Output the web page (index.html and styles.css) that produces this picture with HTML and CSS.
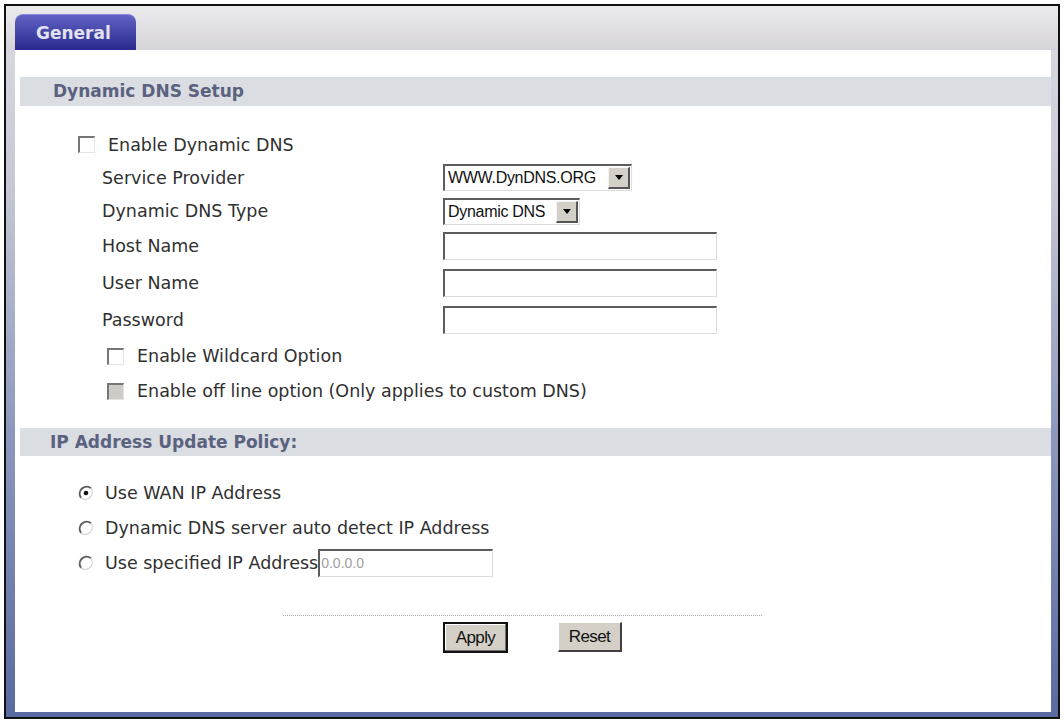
FILE: index.html
```html
<!DOCTYPE html>
<html lang="en">
<head>
    <meta charset="UTF-8">
    <title>Dynamic DNS</title>
    <link rel="stylesheet" href="styles.css">
</head>
<body>
    <div class="frame">
        <div class="tabbar">
            <div class="tab">General</div>
        </div>
        <div class="panel">
            <div class="section-title">Dynamic DNS Setup</div>

            <div class="row row-33 indent-main">
                <span class="check"></span>
                <span class="check-label">Enable Dynamic DNS</span>
            </div>
            <div class="row row-33 field">
                <span class="label">Service Provider</span>
                <div class="select select-wide">
                    <span class="select-value">WWW.DynDNS.ORG</span>
                    <span class="select-btn"><span class="arrow"></span></span>
                </div>
            </div>
            <div class="row row-34 field">
                <span class="label">Dynamic DNS Type</span>
                <div class="select select-short">
                    <span class="select-value">Dynamic DNS</span>
                    <span class="select-btn"><span class="arrow"></span></span>
                </div>
            </div>
            <div class="row row-36 field">
                <span class="label">Host Name</span>
                <span class="input input-wide"></span>
            </div>
            <div class="row row-37 field">
                <span class="label">User Name</span>
                <span class="input input-wide"></span>
            </div>
            <div class="row row-37 field">
                <span class="label">Password</span>
                <span class="input input-wide"></span>
            </div>
            <div class="row row-36 indent-sub">
                <span class="check"></span>
                <span class="check-label">Enable Wildcard Option</span>
            </div>
            <div class="row row-34 indent-sub">
                <span class="check disabled"></span>
                <span class="check-label">Enable off line option (Only applies to custom DNS)</span>
            </div>

            <div class="section-title section-two">IP Address Update Policy:</div>

            <div class="radios">
                <div class="row row-34 indent-radio">
                    <svg class="radio" width="16" height="16" viewBox="0 0 16 16">
                        <circle cx="8" cy="8" r="7" fill="#fff"/>
                        <path d="M3.1 12.9 A7 7 0 0 1 12.9 3.1" stroke="#5e5e5e" stroke-width="2" fill="none"/>
                        <path d="M12.9 3.1 A7 7 0 0 1 3.1 12.9" stroke="#d6d6d6" stroke-width="1.4" fill="none"/>
                        <circle cx="8" cy="8" r="2.3" fill="#111"/>
                    </svg>
                    <span class="check-label">Use WAN IP Address</span>
                </div>
                <div class="row row-36 indent-radio">
                    <svg class="radio" width="16" height="16" viewBox="0 0 16 16">
                        <circle cx="8" cy="8" r="7" fill="#fff"/>
                        <path d="M3.1 12.9 A7 7 0 0 1 12.9 3.1" stroke="#5e5e5e" stroke-width="2" fill="none"/>
                        <path d="M12.9 3.1 A7 7 0 0 1 3.1 12.9" stroke="#d6d6d6" stroke-width="1.4" fill="none"/>
                    </svg>
                    <span class="check-label">Dynamic DNS server auto detect IP Address</span>
                </div>
                <div class="row row-34 indent-radio">
                    <svg class="radio" width="16" height="16" viewBox="0 0 16 16">
                        <circle cx="8" cy="8" r="7" fill="#fff"/>
                        <path d="M3.1 12.9 A7 7 0 0 1 12.9 3.1" stroke="#5e5e5e" stroke-width="2" fill="none"/>
                        <path d="M12.9 3.1 A7 7 0 0 1 3.1 12.9" stroke="#d6d6d6" stroke-width="1.4" fill="none"/>
                    </svg>
                    <span class="check-label">Use specified IP Address</span><span class="input input-ip">0.0.0.0</span>
                </div>
            </div>

            <div class="divider"></div>

            <div class="buttons">
                <span class="btn btn-default">Apply</span>
                <span class="btn">Reset</span>
            </div>
        </div>
    </div>
</body>
</html>
```

FILE: styles.css
```css
body {
    margin: 0;
    background: #fff;
    font-family: "DejaVu Sans", Verdana, sans-serif;
    font-size: 17.5px;
    color: #303030;
}

.frame {
    margin: 4px;
    border: 2px solid #111;
    background: linear-gradient(to bottom, #dcdce2 0%, #c6c8d4 25%, #8c98be 60%, #5a6aa0 100%);
    padding: 0 7px 5px 9px;
    width: 1036px;
}

.tabbar {
    height: 44px;
    margin: 0 -7px 0 -9px;
    padding: 8px 0 0 9px;
    box-sizing: border-box;
    background: linear-gradient(to bottom, #ececef, #d5d3d9);
}

.tab {
    width: 121px;
    height: 36px;
    box-sizing: border-box;
    padding-left: 21px;
    line-height: 36px;
    border-radius: 8px 8px 0 0;
    background: linear-gradient(to bottom, #6262c4, #28288e);
    border-top: 1px solid #8888d8;
    color: #e2e3f0;
    font-size: 17px;
    font-weight: bold;
}

.panel {
    height: 662px;
    background: #fff;
    overflow: hidden;
}

.section-title {
    margin: 27px 0 0 5px;
    height: 29px;
    line-height: 29px;
    padding-left: 33px;
    background: #dadde1;
    color: #5a6280;
    font-size: 17px;
    font-weight: bold;
}

.section-two {
    margin-top: 20px;
    height: 28px;
    line-height: 28px;
    padding-left: 30px;
}

.row {
    display: flex;
    align-items: center;
    white-space: nowrap;
}

.row-33 { height: 33px; }
.row-34 { height: 34px; }
.row-36 { height: 36px; }
.row-37 { height: 37px; }

.indent-main {
    margin-top: 22px;
    padding-left: 63px;
}

.indent-sub {
    padding-left: 92px;
}

.indent-radio {
    padding-left: 63px;
}

.field {
    padding-left: 87px;
}

.label {
    width: 341px;
}

.check {
    width: 17px;
    height: 17px;
    box-sizing: border-box;
    border-top: 2px solid #767676;
    border-left: 2px solid #767676;
    border-right: 1px solid #e4e4e4;
    border-bottom: 1px solid #e4e4e4;
    background: #fff;
    margin-right: 13px;
}

.check.disabled {
    background: #cdcdc6;
}

.radio {
    margin-right: 11px;
}

.radios {
    margin-top: 20px;
}

.select {
    display: flex;
    align-items: center;
    height: 27px;
    box-sizing: border-box;
    border-top: 2px solid #5c5c5c;
    border-left: 2px solid #5c5c5c;
    border-right: 1px solid #dcdcdc;
    border-bottom: 1px solid #dcdcdc;
    font-family: "Liberation Sans", Arial, sans-serif;
    font-size: 16px;
    color: #111;
}

.select-wide { width: 189px; }
.select-short { width: 137px; }

.select-value {
    flex: 1;
    padding-left: 3px;
    letter-spacing: -0.3px;
}

.select-btn {
    width: 22px;
    height: 22px;
    margin-right: 1px;
    box-sizing: border-box;
    background: #d4d0c8;
    border-top: 1px solid #f4f4f4;
    border-left: 1px solid #f4f4f4;
    border-right: 2px solid #555;
    border-bottom: 2px solid #555;
    display: flex;
    align-items: center;
    justify-content: center;
}

.arrow {
    width: 0;
    height: 0;
    border-left: 4px solid transparent;
    border-right: 4px solid transparent;
    border-top: 5px solid #000;
}

.input {
    display: block;
    height: 28px;
    box-sizing: border-box;
    border-top: 2px solid #5c5c5c;
    border-left: 2px solid #5c5c5c;
    border-right: 1px solid #dcdcdc;
    border-bottom: 1px solid #dcdcdc;
    background: #fff;
}

.input-wide { width: 274px; }

.input-ip {
    width: 175px;
    padding-left: 1px;
    line-height: 25px;
    font-family: "Liberation Sans", Arial, sans-serif;
    font-size: 14px;
    color: #a0a0a0;
}

.divider {
    margin: 35px 0 0 268px;
    width: 479px;
    border-top: 1px dotted #a8a8a8;
}

.buttons {
    display: flex;
    align-items: flex-start;
    gap: 50px;
    margin: 6px 0 0 428px;
}

.btn {
    width: 64px;
    height: 30px;
    box-sizing: border-box;
    background: #d4d0c8;
    border-top: 1px solid #fff;
    border-left: 1px solid #fff;
    border-right: 2px solid #404040;
    border-bottom: 2px solid #404040;
    display: flex;
    align-items: center;
    justify-content: center;
    font-family: "Liberation Sans", Arial, sans-serif;
    font-size: 17px;
    letter-spacing: -0.6px;
    color: #111;
}

.btn-default {
    width: 65px;
    height: 31px;
    border: 2px solid #111;
    box-shadow: inset -1px -1px 0 #707070, inset 1px 1px 0 #fff;
}
```
